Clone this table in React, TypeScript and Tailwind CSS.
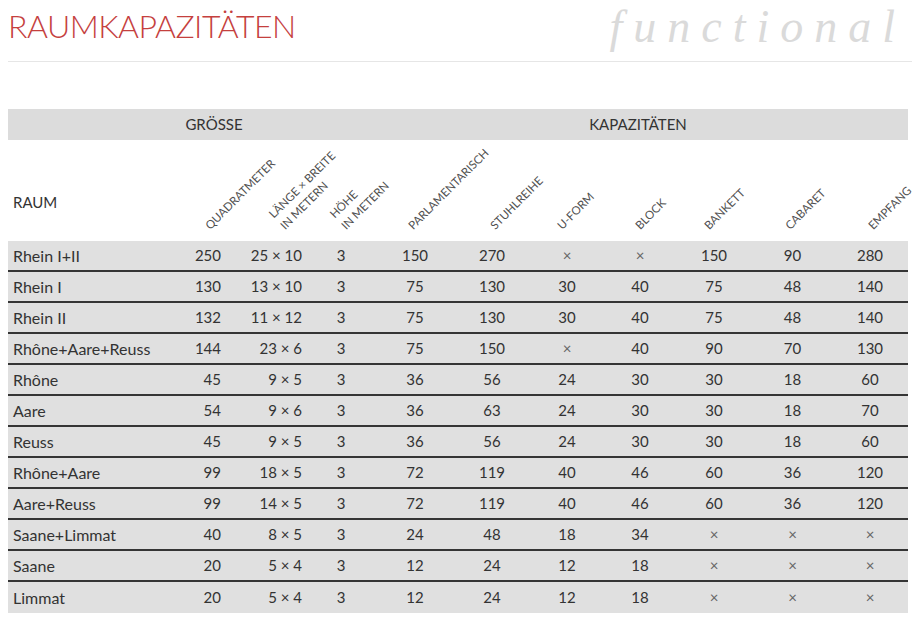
import React from "react";

type Col = {
  width: string;
  align: string;
  label?: string[];
  offset?: string;
};

const cols: Col[] = [
  { width: "w-[172px]", align: "text-left pl-[5px] text-[16px]" },
  { width: "w-[46px]", align: "text-right pr-[5px]", label: ["QUADRATMETER"], offset: "ml-[33px]" },
  { width: "w-[81px]", align: "text-right pr-[5px]", label: ["LÄNGE × BREITE", "IN METERN"], offset: "ml-[62px]" },
  { width: "w-[68px]", align: "text-center", label: ["HÖHE", "IN METERN"], offset: "ml-[42px]" },
  { width: "w-[80px]", align: "text-center", label: ["PARLAMENTARISCH"], offset: "ml-[41px]" },
  { width: "w-[74px]", align: "text-center", label: ["STUHLREIHE"], offset: "ml-[43px]" },
  { width: "w-[76px]", align: "text-center", label: ["U-FORM"], offset: "ml-[36px]" },
  { width: "w-[70px]", align: "text-center", label: ["BLOCK"], offset: "ml-[38px]" },
  { width: "w-[78px]", align: "text-center", label: ["BANKETT"], offset: "ml-[37px]" },
  { width: "w-[79px]", align: "text-center", label: ["CABARET"], offset: "ml-[40px]" },
  { width: "w-[76px]", align: "text-center", label: ["EMPFANG"], offset: "ml-[44px]" },
];

const rows: string[][] = [
  ["Rhein I+II", "250", "25 × 10", "3", "150", "270", "×", "×", "150", "90", "280"],
  ["Rhein I", "130", "13 × 10", "3", "75", "130", "30", "40", "75", "48", "140"],
  ["Rhein II", "132", "11 × 12", "3", "75", "130", "30", "40", "75", "48", "140"],
  ["Rhône+Aare+Reuss", "144", "23 × 6", "3", "75", "150", "×", "40", "90", "70", "130"],
  ["Rhône", "45", "9 × 5", "3", "36", "56", "24", "30", "30", "18", "60"],
  ["Aare", "54", "9 × 6", "3", "36", "63", "24", "30", "30", "18", "70"],
  ["Reuss", "45", "9 × 5", "3", "36", "56", "24", "30", "30", "18", "60"],
  ["Rhône+Aare", "99", "18 × 5", "3", "72", "119", "40", "46", "60", "36", "120"],
  ["Aare+Reuss", "99", "14 × 5", "3", "72", "119", "40", "46", "60", "36", "120"],
  ["Saane+Limmat", "40", "8 × 5", "3", "24", "48", "18", "34", "×", "×", "×"],
  ["Saane", "20", "5 × 4", "3", "12", "24", "12", "18", "×", "×", "×"],
  ["Limmat", "20", "5 × 4", "3", "12", "24", "12", "18", "×", "×", "×"],
];

export default function App() {
  return (
    <div className="relative h-[620px] w-[920px] overflow-hidden bg-white font-['Lato','Liberation_Sans',sans-serif] text-[#333]">
      <header className="relative mx-2 h-[62px] border-b border-[#e6e6e6]">
        <h1 className="pt-[6px] text-[32px] leading-[40px] font-light tracking-[-0.5px] text-[#c5403e]">
          RAUMKAPAZITÄTEN
        </h1>
        <span className="absolute top-[4px] right-[6px] font-['Liberation_Serif',serif] text-[46px] italic leading-none tracking-[11px] text-[#dadada]">
          functional
        </span>
      </header>

      <div className="mx-2 mt-[47px] w-[900px]">
        <div className="flex h-[31px] items-center bg-[#dcdcdc] text-[15px] text-[#333]">
          <div className="w-[412px] text-center">GRÖSSE</div>
          <div className="flex-1 pr-[52px] text-center">KAPAZITÄTEN</div>
        </div>

        <div className="flex h-[101px]">
          {cols.map((c, i) => (
            <div key={i} className={`${c.width} flex h-full items-end`}>
              {i === 0 ? (
                <span className="mb-[28px] pl-[5px] text-[15px]">RAUM</span>
              ) : (
                <span
                  className={`${c.offset} mb-[8px] block origin-bottom-left -rotate-45 text-[11.5px] leading-[16px] whitespace-nowrap text-[#505050]`}
                >
                  {c.label?.map(l => (
                    <span key={l} className="block">
                      {l}
                    </span>
                  ))}
                </span>
              )}
            </div>
          ))}
        </div>

        {rows.map((r, ri) => (
          <div
            key={ri}
            className={`flex h-[31px] items-center bg-[#e0e0e0] text-[15px] ${ri < rows.length - 1 ? "border-b-2 border-[#353535]" : ""}`}
          >
            {r.map((v, ci) => (
              <div
                key={ci}
                className={`${cols[ci].width} ${cols[ci].align} ${v === "×" ? "text-[#666]" : ""}`}
              >
                {v}
              </div>
            ))}
          </div>
        ))}
      </div>
    </div>
  );
}
